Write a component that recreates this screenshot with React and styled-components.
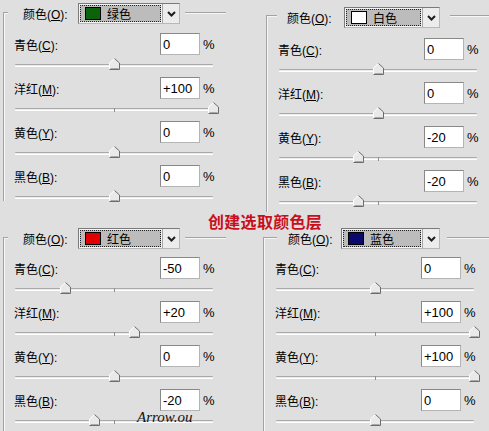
import React from "react";
import styled, { createGlobalStyle } from "styled-components";

const BG = "#dfdfdf";
const CJK = `"Liberation Sans", "Noto Sans CJK SC", sans-serif`;

const Global = createGlobalStyle`
  html, body { margin: 0; padding: 0; background: ${BG}; }
  body { font-family: ${CJK}; color: #000; }
`;

const Page = styled.div`
  position: relative;
  width: 489px;
  height: 431px;
  overflow: hidden;
  background: ${BG};
  display: flex;
  flex-direction: column;
`;

const Band = styled.div`
  display: flex;
  height: ${(p) => p.$h}px;
  flex: none;
`;

const Cell = styled.div`
  box-sizing: border-box;
  flex: none;
  width: ${(p) => p.$w}px;
  padding: ${(p) => p.$top}px 0 0 ${(p) => p.$left}px;
`;

/* etched group box: only top and left edges show */
const Frame = styled.div`
  box-sizing: border-box;
  width: ${(p) => p.$w}px;
  height: ${(p) => p.$h}px;
  border-top: 1px solid #a3a3a3;
  border-left: 1px solid #a3a3a3;
  box-shadow: inset 1px 1px 0 #f6f6f6;
  display: flex;
  flex-direction: column;
`;

const Legend = styled.div`
  align-self: flex-start;
  display: flex;
  align-items: center;
  height: 21px;
  margin: ${(p) => p.$lift}px 0 0 ${(p) => p.$indent}px;
  padding: 0 ${(p) => p.$padR}px 0 ${(p) => p.$padL}px;
  background: ${BG};
`;

const LegendLabel = styled.span`
  width: ${(p) => p.$w}px;
  font-size: 12px;
  white-space: nowrap;
`;

const Key = styled.span`
  text-decoration: underline;
  text-underline-offset: 1px;
`;

const Select = styled.div`
  box-sizing: border-box;
  display: flex;
  width: ${(p) => p.$w}px;
  height: 21px;
  border: 1px solid #7a7a7a;
  border-right-color: #b8b8b8;
  border-bottom-color: #b8b8b8;
  background: #f4f4f4;
`;

const SelectField = styled.div`
  flex: 1;
  display: flex;
  align-items: center;
  gap: 6px;
  margin: 1px;
  padding-left: 5px;
  background: #bcbcbc;
  outline: 1px dotted #222;
  outline-offset: -1px;
  font-size: 12px;
`;

const Swatch = styled.span`
  box-sizing: border-box;
  width: 16px;
  height: 13px;
  border: 1px solid #000;
  background: ${(p) => p.$c};
`;

const DropButton = styled.div`
  width: 16px;
  display: flex;
  align-items: center;
  justify-content: center;
  background: #ececec;
  border-left: 1px solid #a6a6a6;
`;

const Body = styled.div`
  width: 200px;
  margin: ${(p) => p.$gap}px 0 0 ${(p) => p.$inset}px;
  display: flex;
  flex-direction: column;
`;

const Row = styled.div`
  display: flex;
  flex-direction: column;
  height: 44px;
`;

const FieldLine = styled.div`
  display: flex;
  align-items: center;
  height: 22px;
`;

const Label = styled.span`
  flex: 1;
  font-size: 12px;
  white-space: nowrap;
`;

const Input = styled.div`
  box-sizing: border-box;
  width: 40px;
  height: 22px;
  display: flex;
  align-items: center;
  padding: 1px 2px 0;
  background: #fff;
  border: 1px solid #b4b4b4;
  border-top-color: #888;
  border-left-color: #888;
  font-family: "Liberation Sans", sans-serif;
  font-size: 13px;
`;

const Percent = styled.span`
  width: 11px;
  margin-left: 3px;
  font-family: "Liberation Sans", sans-serif;
  font-size: 13px;
`;

const SliderBox = styled.div`
  box-sizing: border-box;
  height: 22px;
  padding: 9px 0 0 1px;
`;

const Track = styled.div`
  position: relative;
  box-sizing: border-box;
  width: 198px;
  height: 3px;
  border-top: 1px solid #a9a9a9;
  border-bottom: 1px solid #fff;
  border-radius: 1px;
  background: #ececec;
`;

const Tick = styled.span`
  position: absolute;
  left: 50%;
  top: -1px;
  width: 1px;
  height: 4px;
  background: #8e8e8e;
`;

const Thumb = styled.svg`
  position: absolute;
  top: -7px;
  width: 11px;
  height: 12px;
  margin-left: -5px;
`;

const Title = styled.div`
  position: absolute;
  left: 208px;
  top: 209px;
  font-family: "Noto Sans CJK SC", sans-serif;
  font-weight: 700;
  font-size: 16px;
  letter-spacing: 0.3px;
  color: #c80f1e;
  white-space: nowrap;
`;

const Credit = styled.div`
  position: absolute;
  left: 137px;
  top: 409px;
  font-family: "Liberation Serif", serif;
  font-style: italic;
  font-size: 15px;
  line-height: 17px;
  color: #111;
`;

function Chevron() {
  return (
    <svg width="9" height="6" viewBox="0 0 9 6">
      <polyline points="1,1 4.5,4.5 8,1" fill="none" stroke="#1e1e1e" strokeWidth="2" />
    </svg>
  );
}

function Slider({ value }) {
  const pct = ((value + 100) / 200) * 100;
  return (
    <SliderBox>
      <Track>
        <Tick />
        <Thumb viewBox="0 0 11 12" style={{ left: `${pct}%` }}>
          <polygon points="5.5,0.5 10.5,5 10.5,11.5 0.5,11.5 0.5,5" fill="#e9e9e9" />
          <polyline points="0.5,11 0.5,5 5.5,0.5" fill="none" stroke="#ffffff" strokeWidth="1" />
          <polyline points="5.5,0.5 10.5,5 10.5,11.5 0.5,11.5" fill="none" stroke="#6c6c6c" strokeWidth="1" />
          <line x1="1.5" y1="10.5" x2="9.5" y2="10.5" stroke="#a8a8a8" strokeWidth="1" />
        </Thumb>
      </Track>
    </SliderBox>
  );
}

const CHANNELS = [
  { name: "青色", key: "C" },
  { name: "洋红", key: "M" },
  { name: "黄色", key: "Y" },
  { name: "黑色", key: "B" },
];

const fmt = (v) => (v > 0 ? `+${v}` : `${v}`);

function Panel({ cell, frame, legend, select, body, values }) {
  return (
    <Cell $w={cell.w} $top={cell.top} $left={cell.left}>
      <Frame $w={frame.w} $h={frame.h}>
        <Legend $lift={legend.lift} $indent={legend.indent} $padL={legend.padL} $padR={legend.padR}>
          <LegendLabel $w={legend.labelW}>
            颜色(<Key>O</Key>):
          </LegendLabel>
          <Select $w={select.w}>
            <SelectField>
              <Swatch $c={select.color} />
              <span>{select.text}</span>
            </SelectField>
            <DropButton>
              <Chevron />
            </DropButton>
          </Select>
        </Legend>
        <Body $gap={body.gap} $inset={body.inset}>
          {CHANNELS.map((ch, i) => (
            <Row key={ch.key}>
              <FieldLine>
                <Label>
                  {ch.name}(<Key>{ch.key}</Key>):
                </Label>
                <Input>{fmt(values[i])}</Input>
                <Percent>%</Percent>
              </FieldLine>
              <Slider value={values[i]} />
            </Row>
          ))}
        </Body>
      </Frame>
    </Cell>
  );
}

export default function App() {
  return (
    <>
      <Global />
      <Page>
        <Band $h={215}>
          <Panel
            cell={{ w: 245, top: 12, left: 3 }}
            frame={{ w: 223, h: 189 }}
            legend={{ lift: -10, indent: 4, padL: 15, padR: 5, labelW: 55 }}
            select={{ w: 102, color: "#0b640b", text: "绿色" }}
            body={{ gap: 9, inset: 10 }}
            values={[0, 100, 0, 0]}
          />
          <Panel
            cell={{ w: 244, top: 15, left: 21 }}
            frame={{ w: 223, h: 197 }}
            legend={{ lift: -9, indent: 10, padL: 10, padR: 10, labelW: 57 }}
            select={{ w: 96, color: "#ffffff", text: "白色" }}
            body={{ gap: 10, inset: 11 }}
            values={[0, 0, -20, -20]}
          />
        </Band>
        <Band $h={216}>
          <Panel
            cell={{ w: 245, top: 22, left: 3 }}
            frame={{ w: 223, h: 194 }}
            legend={{ lift: -10, indent: 4, padL: 15, padR: 5, labelW: 55 }}
            select={{ w: 102, color: "#e10000", text: "红色" }}
            body={{ gap: 8, inset: 10 }}
            values={[-50, 20, 0, -20]}
          />
          <Panel
            cell={{ w: 244, top: 22, left: 18 }}
            frame={{ w: 226, h: 194 }}
            legend={{ lift: -10, indent: 13, padL: 11, padR: 7, labelW: 53 }}
            select={{ w: 99, color: "#0a0a6c", text: "蓝色" }}
            body={{ gap: 8, inset: 11 }}
            values={[0, 100, 100, 0]}
          />
        </Band>
        <Title>创建选取颜色层</Title>
        <Credit>Arrow.ou</Credit>
      </Page>
    </>
  );
}
